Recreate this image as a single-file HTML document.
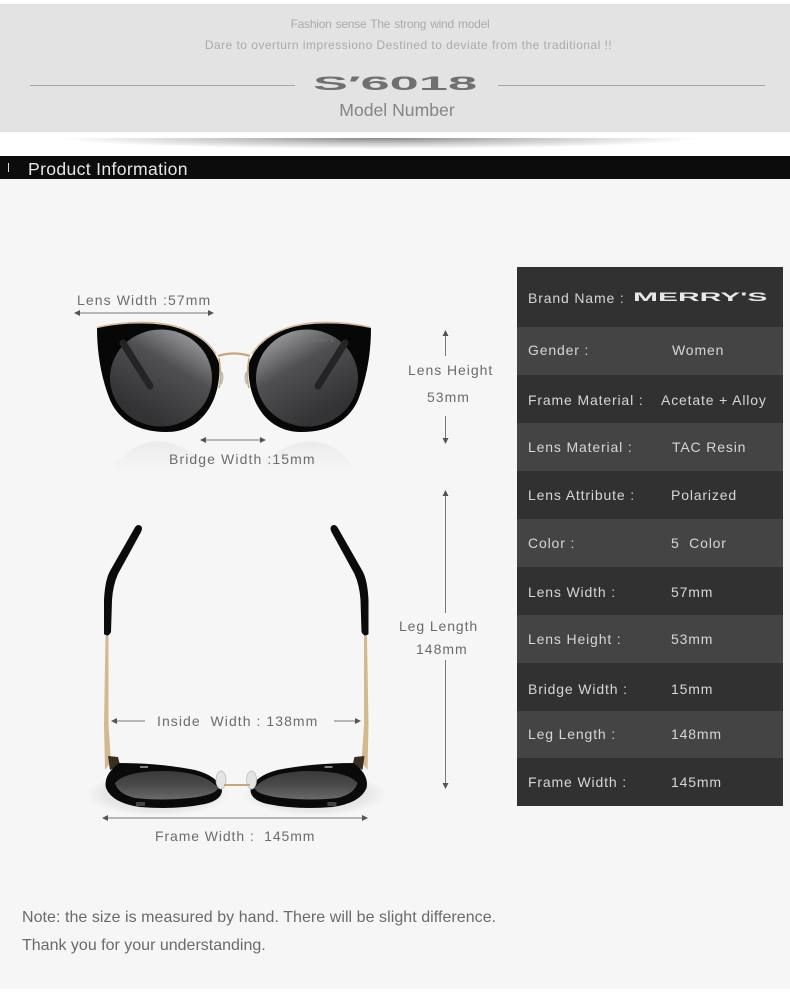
<!DOCTYPE html>
<html><head><meta charset="utf-8">
<style>
html,body{margin:0;padding:0;background:#fff}
#p{position:relative;width:790px;height:992px;overflow:hidden;background:#fff;font-family:"Liberation Sans",sans-serif}
#p div{position:absolute}
.t{white-space:pre;line-height:20px;height:20px}
.g{color:#6c6c6c;font-size:14px;letter-spacing:1px}
.w{color:#d6d6d6;font-size:14px;letter-spacing:.85px}
</style></head><body>
<div id="p">
<div style="left:0;top:179px;width:790px;height:810px;background:#f6f6f6"></div>
<div style="left:0;top:4px;width:790px;height:128px;background:#e3e3e3"></div>
<div style="left:60px;top:138px;width:640px;height:11px;background:radial-gradient(ellipse 50% 100% at 50% 0,#858585 0,#c4c4c4 45%,rgba(255,255,255,0) 100%)"></div>
<div style="left:0;top:156px;width:790px;height:23px;background:#0c0c0c"></div>
<div style="left:8px;top:163px;width:1px;height:9px;background:#ddd"></div>

<div class="t" style="left:0;width:780px;text-align:center;top:14px;font-size:12px;letter-spacing:-.25px;word-spacing:1px;color:#aaa">Fashion sense The strong wind model</div>
<div class="t" style="left:0;width:817px;text-align:center;top:35px;font-size:12px;letter-spacing:.47px;color:#aaa">Dare to overturn impressiono Destined to deviate from the traditional !!</div>
<div style="left:30px;top:85px;width:265px;height:1px;background:#a5a5a5"></div>
<div style="left:498px;top:85px;width:267px;height:1px;background:#a5a5a5"></div>
<div class="t" style="left:313px;top:74px;font-size:20px;font-weight:bold;color:#707070;transform-origin:0 50%;transform:scale(2.62,.98)">S′6018</div>
<div class="t" style="left:0;width:794px;text-align:center;top:100px;font-size:17.6px;color:#858585">Model Number</div>
<div class="t" style="left:28px;top:159px;font-size:17.6px;letter-spacing:.33px;color:#e6e6e6">Product Information</div>

<svg style="position:absolute;left:0;top:0" width="790" height="992" viewBox="0 0 790 992">
<defs>
<linearGradient id="lens" x1="0.8" y1="0.05" x2="0.3" y2="0.85"><stop offset="0" stop-color="#9a9a9c"/><stop offset=".4" stop-color="#505053"/><stop offset="1" stop-color="#333336"/></linearGradient>
<linearGradient id="lens2" x1="0" y1="0" x2="0" y2="1"><stop offset="0" stop-color="#3a3a3a"/><stop offset=".5" stop-color="#4a4a4a"/><stop offset="1" stop-color="#6a6a6a"/></linearGradient>
<linearGradient id="refl" x1="0" y1="0" x2="0" y2="1"><stop offset="0" stop-color="#ebebeb"/><stop offset="1" stop-color="#f6f6f6"/></linearGradient>
<radialGradient id="sh"><stop offset="0" stop-color="#999"/><stop offset=".75" stop-color="#ccc"/><stop offset="1" stop-color="#f6f6f6"/></radialGradient>
<marker id="a" markerWidth="6" markerHeight="6" refX="5" refY="3" orient="auto"><path d="M0 0L6 3L0 6Z" fill="#555"/></marker>
<g id="front">
<path d="M113 468Q150 418 205 462V472H113Z" fill="url(#refl)"/>
<path d="M97 328C120 323 145 322 165 325C195 330 213 345 219 363C222 395 205 432 167 432C135 432 118 418 110 400C102 380 97 355 97 328Z" fill="#070707"/>
<path d="M97 327.500C120 322 145 321 165 324C190 328 208 340 216 354" fill="none" stroke="#d6b48a" stroke-width="1.300"/>
<ellipse cx="161" cy="378" rx="51" ry="48.500" fill="url(#lens)"/>
<path d="M123 343L150 386" stroke="#242426" stroke-width="7" stroke-linecap="round" fill="none"/>
<path d="M219 358Q222 378 219 388" stroke="#c9a67c" stroke-width="1.500" fill="none"/>
</g>
<g id="side">
<ellipse cx="158" cy="794" rx="72" ry="22" fill="url(#sh)" opacity=".35"/>
<path d="M134 529Q137 523 141 526Q143 528 141 532L118 574Q113 585 112 600L111 632Q108 638 104 634L104 600Q105 580 110 571Z" fill="#0b0b0b"/>
<path d="M105.500 636H108.500L108.500 725L111 762L105 770L104 725Z" fill="#d4b98e"/>
<path d="M108 756L118 757L120 765L110 770Z" fill="#3a2e22"/>
<path d="M119 763Q160 763 195 770Q218 776 222 790Q222 800 205 804Q175 810 140 807Q112 803 106 788Q103 775 119 763Z" fill="#0a0a0a"/>
<path d="M115 783Q125 771 165 771Q205 772 218 788Q216 795 190 798Q160 801 135 798Q118 794 115 783Z" fill="url(#lens2)"/>
<path d="M140 767H148" stroke="#aaa" stroke-width="1.500"/>
<path d="M136 804H145" stroke="#444" stroke-width="4"/>
<ellipse cx="221" cy="780" rx="5" ry="9" fill="#e4e4e4" stroke="#bbb" stroke-width=".8"/>
</g>
</defs>

<!-- front glasses -->
<use href="#front"/>
<use href="#front" transform="matrix(-1 0 0 1 468 0)"/>
<path d="M218 356Q234 351 250 356" stroke="#c9a67c" stroke-width="2.200" fill="none"/>
<path d="M221 372Q224 376 221 384M247 372Q244 376 247 384" stroke="#bbb" stroke-width="2" fill="none"/>
<text x="310" y="342" font-family="Liberation Sans" font-size="4.500" fill="#777" letter-spacing=".6">MERRY'S</text>

<!-- side glasses -->
<use href="#side"/>
<use href="#side" transform="matrix(-1 0 0 1 472.500 0)"/>
<path d="M224 785H250" stroke="#c9a67c" stroke-width="2"/>

<!-- arrows -->
<g stroke="#777" stroke-width="1" fill="none">
<path d="M143 313H75" marker-end="url(#a)"/>
<path d="M143 313H213" marker-end="url(#a)"/>
<path d="M233 440H201" marker-end="url(#a)"/>
<path d="M233 440H265" marker-end="url(#a)"/>
<path d="M445.500 356V331" marker-end="url(#a)"/>
<path d="M445.500 416V443" marker-end="url(#a)"/>
<path d="M445.500 613V491" marker-end="url(#a)"/>
<path d="M445.500 660V788" marker-end="url(#a)"/>
<path d="M145 721H112" marker-end="url(#a)"/>
<path d="M334 721H360" marker-end="url(#a)"/>
<path d="M235 818H103" marker-end="url(#a)"/>
<path d="M235 818H367" marker-end="url(#a)"/>
</g>
</svg>

<div class="t g" style="left:77px;top:290px;letter-spacing:1.1px">Lens Width :57mm</div>
<div class="t g" style="left:169px;top:449px;letter-spacing:1.1px">Bridge Width :15mm</div>
<div class="t g" style="left:408px;top:360px;letter-spacing:.95px">Lens Height</div>
<div class="t g" style="left:427px;top:387px">53mm</div>
<div class="t g" style="left:399px;top:616px;letter-spacing:.9px">Leg Length</div>
<div class="t g" style="left:416px;top:639px">148mm</div>
<div class="t g" style="left:157px;top:711px;letter-spacing:1.05px">Inside  Width : 138mm</div>
<div class="t g" style="left:155px;top:826px;letter-spacing:.9px">Frame Width :  145mm</div>
<div class="t" style="left:22px;top:908px;font-size:16px;letter-spacing:.05px;color:#6a6a6a">Note: the size is measured by hand. There will be slight difference.</div>
<div class="t" style="left:22px;top:936px;font-size:16px;color:#6a6a6a">Thank you for your understanding.</div>

<!-- table -->
<div style="left:517px;top:267px;width:266px;height:539px;background:#313131"></div>
<div style="left:517px;top:327px;width:266px;height:48px;background:#444"></div>
<div style="left:517px;top:423px;width:266px;height:48px;background:#444"></div>
<div style="left:517px;top:519px;width:266px;height:48px;background:#444"></div>
<div style="left:517px;top:615px;width:266px;height:48px;background:#444"></div>
<div style="left:517px;top:711px;width:266px;height:47px;background:#444"></div>

<div class="t w" style="left:528px;top:288px">Brand Name :</div>
<div class="t" style="left:633px;top:288px;font-size:15px;font-weight:bold;color:#e8e8e8;transform-origin:0 50%;transform:scale(2,.8)">MERRY'S</div>
<div class="t w" style="left:528px;top:340px">Gender :</div><div class="t w" style="left:672px;top:340px">Women</div>
<div class="t w" style="left:528px;top:390px">Frame Material :</div><div class="t w" style="left:661px;top:390px">Acetate + Alloy</div>
<div class="t w" style="left:528px;top:437px">Lens Material :</div><div class="t w" style="left:672px;top:437px">TAC Resin</div>
<div class="t w" style="left:528px;top:485px">Lens Attribute :</div><div class="t w" style="left:671px;top:485px">Polarized</div>
<div class="t w" style="left:528px;top:533px">Color :</div><div class="t w" style="left:671px;top:533px">5  Color</div>
<div class="t w" style="left:528px;top:582px">Lens Width :</div><div class="t w" style="left:671px;top:582px">57mm</div>
<div class="t w" style="left:528px;top:629px">Lens Height :</div><div class="t w" style="left:671px;top:629px">53mm</div>
<div class="t w" style="left:528px;top:679px">Bridge Width :</div><div class="t w" style="left:671px;top:679px">15mm</div>
<div class="t w" style="left:528px;top:724px">Leg Length :</div><div class="t w" style="left:671px;top:724px">148mm</div>
<div class="t w" style="left:528px;top:772px">Frame Width :</div><div class="t w" style="left:671px;top:772px">145mm</div>
</div>
</body></html>
